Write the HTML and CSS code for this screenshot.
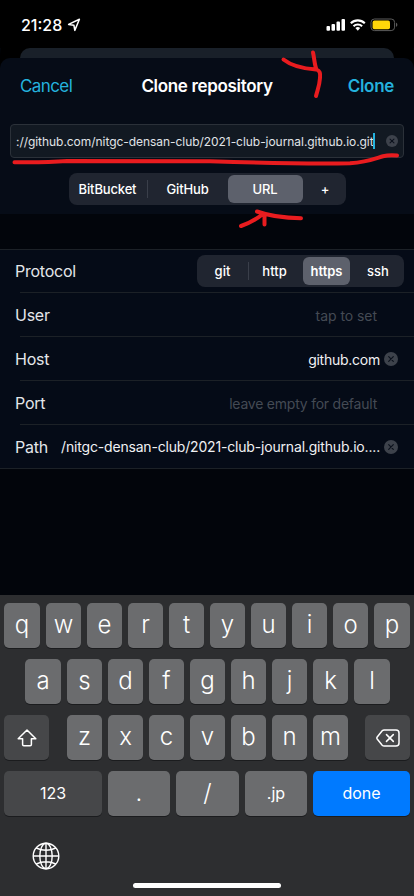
FILE: index.html
```html
<!DOCTYPE html>
<html lang="en">
<head>
<meta charset="utf-8">
<title>Clone repository</title>
<link rel="stylesheet" href="styles.css">
</head>
<body>
<main class="screen">
  <div class="status">
    <span class="time">21:28</span>
    <svg class="loc" width="14" height="14" viewBox="0 0 14 14"><path d="M1.6 6.4 12.400 1.3 7.8 12.400 6.9 7.2Z" fill="none" stroke="#fff" stroke-width="1.5" stroke-linejoin="round"/></svg>
    <svg class="indicators" width="72" height="14" viewBox="0 0 72 14">
      <g fill="#fff"><rect x="0.5" y="8" width="3.5" height="4.7" rx="1"/><rect x="5.5" y="6" width="3.5" height="6.7" rx="1"/><rect x="10.5" y="3.5" width="3.5" height="9.2" rx="1"/><rect x="15.5" y="1" width="3.5" height="11.7" rx="1"/></g>
      <g fill="none" stroke="#fff" stroke-width="2.1"><path d="M24.8 5.2a10 10 0 0 1 14 0M27.5 8.2a6.2 6.2 0 0 1 8.6 0"/></g>
      <path d="M29.4 10a3.6 3.6 0 0 1 4.8 0L31.8 12.7Z" fill="#fff"/>
      <rect x="45" y="1" width="23.6" height="11.6" rx="3.4" fill="none" stroke="#5c5c5c"/>
      <rect x="46.6" y="2.6" width="17.4" height="8.6" rx="1.8" fill="#ffd60a"/>
      <path d="M70 4.8c1.8.5 1.8 3.5 0 4Z" fill="#5c5c5c"/>
    </svg>
  </div>
  <div class="backcard"></div>
  <section class="sheet">
    <header class="nav"><span class="cancel">Cancel</span><h1 class="title">Clone repository</h1><span class="clone">Clone</span></header>
    <div class="field"><span class="url">://github.com/nitgc-densan-club/2021-club-journal.github.io.git</span><i class="caret"></i>
      <svg class="clear small" viewBox="0 0 14 14"><circle cx="7" cy="7" r="7"/><path d="M4.7 4.7 9.3 9.3M9.3 4.7 4.7 9.3"/></svg></div>
    <div class="seg source"><span class="bb">BitBucket</span><i class="div"></i><span class="gh">GitHub</span><span class="on ur">URL</span><span class="plus">+</span></div>
  </section>
  <section class="form">
    <div class="row"><span class="label l-protocol">Protocol</span><div class="seg proto"><span class="p-git">git</span><i class="div"></i><span class="p-http">http</span><span class="on p-https">https</span><span class="p-ssh">ssh</span></div></div>
    <div class="row"><span class="label">User</span><span class="hint tap">tap to set</span></div>
    <div class="row"><span class="label">Host</span><span class="value">github.com</span><svg class="clear" viewBox="0 0 14 14"><circle cx="7" cy="7" r="7"/><path d="M4.7 4.7 9.3 9.3M9.3 4.7 4.7 9.3"/></svg></div>
    <div class="row"><span class="label">Port</span><span class="hint">leave empty for default</span></div>
    <div class="row"><span class="label">Path</span><span class="value path">/nitgc-densan-club/2021-club-journal.github.io....</span><svg class="clear" viewBox="0 0 14 14"><circle cx="7" cy="7" r="7"/><path d="M4.7 4.7 9.3 9.3M9.3 4.7 4.7 9.3"/></svg></div>
  </section>
  <section class="keyboard">
    <div class="keys wide-ends"><b>q</b><b>w</b><b>e</b><b>r</b><b>t</b><b>y</b><b>u</b><b>i</b><b>o</b><b>p</b></div>
    <div class="keys wide-ends second"><b>a</b><b>s</b><b>d</b><b>f</b><b>g</b><b>h</b><b>j</b><b>k</b><b>l</b></div>
    <div class="keys third">
      <b class="dark"><svg width="20" height="18" viewBox="0 0 20 18"><path d="M10 1 18.8 9.8H14.4V15.6Q14.4 16.8 13.2 16.8H6.8Q5.6 16.8 5.6 15.6V9.8H1.2Z"/></svg></b>
      <div class="letters"><b>z</b><b>x</b><b>c</b><b>v</b><b>b</b><b>n</b><b>m</b></div>
      <b class="dark"><svg width="24" height="18" viewBox="0 0 24 18"><path d="M8.2 1H20Q23 1 23 4V14Q23 17 20 17H8.2Q7 17 6.2 16.2L1.2 10Q.5 9 1.2 8L6.2 1.8Q7 1 8.2 1ZM10.500 5.600 17.300 12.400M17.300 5.600 10.500 12.400"/></svg></b>
    </div>
    <div class="keys fourth"><b class="dark word">123</b><b>.</b><b>/</b><b class="word">.jp</b><b class="done word">done</b></div>
    <svg class="globe" width="28" height="28" viewBox="0 0 28 28"><circle cx="14" cy="14" r="12.8"/><ellipse cx="14" cy="14" rx="6.2" ry="12.8"/><path d="M14 1.2V26.8M1.2 14H26.8M4.2 6Q14 10.5 23.8 6M4.2 22Q14 17.5 23.8 22"/></svg>
    <div class="home"></div>
  </section>
  <svg class="ink" width="414" height="240" viewBox="0 0 414 240">
    <path d="M283.5 59.5C291 65.5 302 68.5 316 69.5M313 52.5C314.500 59 314.500 65 316.500 69.500C320 71 320.500 73 320 78C319.500 86 317.500 90 316 96"/>
    <path d="M14.500 162.200C34 162.500 50 162.300 67 161L210 161.200C250 162.500 310 163.800 350 163.200C368 162 377 157.800 383 156.200Q389 154.800 397 155.500"/>
    <path d="M257 211.500C268 215.500 280 218 301 218.300M241 226C250 223 258 218 263 214M264.500 214.500V224.500"/>
  </svg>
</main>
</body>
</html>
```
FILE: styles.css
```css
* { box-sizing: border-box; }
body { margin: 0; background: #000; font-family: Inter, "Liberation Sans", sans-serif; color: #fff; }
.screen { position: relative; width: 414px; height: 896px; overflow: hidden; display: flex; flex-direction: column; background: #02050b; white-space: nowrap; }
.status { height: 48px; background: #000; display: flex; align-items: flex-start; padding: 15px 16px 0 21px; line-height: 20px; }
.time { font-size: 16px; font-weight: 500; letter-spacing: 0; width: 46px; }
.loc { margin-top: 3px; }
.indicators { margin: 3px 0 0 auto; }
.backcard { height: 10px; background: #192029; border-radius: 10px 10px 0 0; margin: 0 20px; box-shadow: 0 0 0 20px #000; }
.sheet { height: 156px; background: #060c17; border-radius: 10px 10px 0 0; display: flex; flex-direction: column; align-items: center; }
.backcard, .sheet { flex-shrink: 0; }
.status, .sheet { position: relative; }
.nav { width: 100%; height: 66px; padding: 18px 20px 0; display: grid; grid-template-columns: 1fr auto 1fr; line-height: 21px; color: #24b2de; }
.cancel { font-size: 17px; letter-spacing: -.6px; }
.title { margin: 0; color: #fff; font-size: 17px; font-weight: 600; letter-spacing: -.33px; }
.clone { text-align: right; font-size: 17px; font-weight: 600; letter-spacing: -.3px; }
.field { width: 394px; height: 34px; border: 1px solid #2b3139; border-radius: 4px; background: #121922; display: flex; align-items: center; padding: 0 5px; }
.url { font-size: 12px; color: #e0e3e7; letter-spacing: -.05px; }
.caret { width: 2px; height: 16px; background: #24b2de; margin-left: -1px; }
.clear { width: 14px; height: 14px; flex: none; }
.clear circle { fill: #3d424b; }
.clear path { stroke: #0b111c; stroke-width: 1.2; stroke-linecap: round; }
.small { width: 12px; height: 12px; margin-left: auto; }
.seg { height: 32px; border-radius: 8px; background: #202530; display: flex; align-items: center; font-size: 13px; font-weight: 500; }
.seg span { text-align: center; line-height: 28px; height: 28px; }
.seg .on { background: #5d616c; border-radius: 6px; font-weight: 600; }
.div { width: 1px; height: 18px; background: #3a3f4a; }
.source { width: 277px; margin-top: 15px; }
.source span { letter-spacing: -.15px; }
.bb { width: 78px; } .gh { width: 80px; } .source .ur { width: 75px; font-weight: 500; } .plus { width: 43px; padding-left: 2px; }
.form { margin-top: 35px; background: #050b17; border-top: 1px solid #1c2127; border-bottom: 1px solid #1c2127; height: 220px; flex: none; }
.row { height: 44px; display: flex; align-items: center; padding: 0 16px 0 15px; background: linear-gradient(#1c2127, #1c2127) 20px 100% / 100% 1px no-repeat; }
.row:first-child { height: 43px; padding-right: 10px; padding-bottom: 1px; }
.row:last-child { background: none; height: 43px; }
.label { font-size: 16px; color: #e4e6ea; margin-right: auto; letter-spacing: -.25px; }
.proto { width: 207px; }
.p-git { width: 51px; } .p-http { width: 51px; } .p-https { width: 47px; margin-left: 3px; } .p-ssh { width: 54px; padding-left: 2px; }
.hint { color: #444a54; font-size: 14px; margin-right: 21px; letter-spacing: -.23px; }
.tap { letter-spacing: -.05px; }
.value { font-size: 14px; color: #f0f1f3; margin-right: 4px; letter-spacing: -.25px; }
.path { letter-spacing: -.18px; }
.keyboard { margin-top: auto; height: 301px; background: #2d2e30; padding: 8px 4px 0; display: flex; flex-direction: column; gap: 11px; }
.keys { display: flex; gap: 6px; height: 45px; }
.keys b { flex: 0 0 35px; display: flex; align-items: center; justify-content: center; padding-bottom: 3px; border-radius: 5px; background: #6b6c6e; box-shadow: 0 1px 0 #1b1c1e; font-size: 24px; font-weight: 300; }
.wide-ends b:first-child, .wide-ends b:last-child { flex-basis: 36px; }
.second { padding: 0 21px; }
.third { justify-content: space-between; gap: 0; }
.letters { display: flex; gap: 6px; margin-left: 1px; }
.keys .dark { background: #464749; }
.third .dark { flex: 0 0 45px; padding: 1px 0 0; }
.dark svg { fill: none; stroke: #fff; stroke-width: 1.5; stroke-linejoin: round; stroke-linecap: round; }
.fourth { display: grid; grid-template-columns: 98px 62px 63px 62px 97px; gap: 6px; }
.keys .word { font-size: 16px; font-weight: 400; padding-bottom: 1px; }
.keys .done { background: #007aff; padding-bottom: 2px; }
.globe { margin: 15px 0 0 27.500px; fill: none; stroke: #fff; stroke-width: 1.4; }
.home { width: 148px; height: 5px; border-radius: 3px; background: #fff; margin: 2px 0 0 129px; }
.ink { position: absolute; left: 0; top: 0; fill: none; stroke: #e91c1f; stroke-width: 4; stroke-linecap: round; stroke-linejoin: round; }
```
